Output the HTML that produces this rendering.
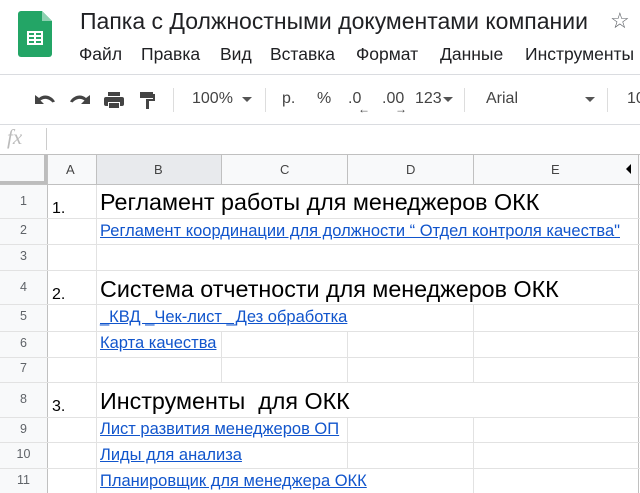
<!DOCTYPE html><html><head><meta charset="utf-8"><style>
body{margin:0;width:640px;height:493px;overflow:hidden;background:#fff;font-family:"Liberation Sans",Arial,sans-serif;position:relative}
.a{position:absolute;white-space:nowrap}
.hl{position:absolute;height:1px;background:#e2e2e2}
.vl{position:absolute;width:1px;background:#e2e2e2}
.rn{position:absolute;left:0;width:47px;text-align:center;font-size:12.5px;color:#5f6368}
.lk{color:#1155cc;text-decoration:underline;font-size:16.5px}
.hd{font-size:23.3px;color:#000}
.tb{color:#444;font-size:16px}
.m{position:absolute;top:44px;font-size:17.5px;color:#202124;white-space:nowrap}
</style></head><body>
<svg class="a" style="left:18px;top:11px" width="34" height="46" viewBox="0 0 34 46"><path d="M3 0h21l10 10v33a3 3 0 0 1-3 3H3a3 3 0 0 1-3-3V3a3 3 0 0 1 3-3z" fill="#23a566"/><path d="M24 0v10h10z" fill="#8ed1b1"/><rect x="9" y="20" width="16" height="14" fill="#fff"/><g fill="#23a566"><rect x="11" y="22" width="5" height="2"/><rect x="18" y="22" width="5" height="2"/><rect x="11" y="26" width="5" height="2"/><rect x="18" y="26" width="5" height="2"/><rect x="11" y="30" width="5" height="2"/><rect x="18" y="30" width="5" height="2"/></g></svg>
<div class="a" style="left:80px;top:8px;font-size:23px;color:#202124">Папка с Должностными документами компании</div>
<div class="a" style="left:610px;top:8px;font-size:22px;color:#5f6368">☆</div>
<div class="m" style="left:79px">Файл</div>
<div class="m" style="left:141px">Правка</div>
<div class="m" style="left:220px">Вид</div>
<div class="m" style="left:270px">Вставка</div>
<div class="m" style="left:356px">Формат</div>
<div class="m" style="left:440px">Данные</div>
<div class="m" style="left:525px">Инструменты</div>
<div class="hl" style="left:0;width:640px;top:74px;background:#dadce0"></div>
<svg class="a" style="left:33px;top:89px" width="140" height="22" viewBox="0 0 140 22" fill="#444">
<path d="M2 6v9h9l-3.5-3.5c3-2.5 8-2.5 12 2l2.5-1c-3.5-6-11-8-16-3.5z"/>
<path d="M57 6v9h-9l3.5-3.5c-3-2.5-8-2.5-12 2l-2.5-1c3.5-6 11-8 16-3.5z"/>
<rect x="75" y="3" width="12" height="4"/><rect x="71" y="8" width="20" height="9" rx="2"/><rect x="75" y="13" width="12" height="6" fill="#fff"/><rect x="76" y="14" width="10" height="5"/>
<rect x="107" y="3" width="13" height="6"/><rect x="120" y="5" width="2" height="6"/><rect x="113" y="10" width="9" height="2"/><rect x="113" y="10" width="3" height="10"/>
</svg>
<div class="vl" style="left:173px;top:88px;height:24px;background:#ddd"></div>
<div class="a tb" style="left:192px;top:90px">100%</div>
<div class="a" style="left:242px;top:97px;border:5px solid transparent;border-top-color:#555;width:0;height:0"></div>
<div class="vl" style="left:265px;top:88px;height:24px;background:#ddd"></div>
<div class="a tb" style="left:282px;top:90px">р.</div>
<div class="a tb" style="left:317px;top:90px">%</div>
<div class="a tb" style="left:348px;top:90px">.0</div>
<div class="a" style="left:358px;top:102px;font-size:12px;color:#444">←</div>
<div class="a tb" style="left:382px;top:90px">.00</div>
<div class="a" style="left:395px;top:102px;font-size:12px;color:#444">→</div>
<div class="a tb" style="left:415px;top:90px">123</div>
<div class="a" style="left:443px;top:97px;border:5px solid transparent;border-top-color:#555;width:0;height:0"></div>
<div class="vl" style="left:464px;top:88px;height:24px;background:#ddd"></div>
<div class="a tb" style="left:486px;top:90px">Arial</div>
<div class="a" style="left:585px;top:97px;border:5px solid transparent;border-top-color:#555;width:0;height:0"></div>
<div class="vl" style="left:607px;top:88px;height:24px;background:#ddd"></div>
<div class="a tb" style="left:627px;top:90px">10</div>
<div class="hl" style="left:0;width:640px;top:124px;background:#dadce0"></div>
<div class="a" style="left:7px;top:125px;font-family:'Liberation Serif',serif;font-style:italic;font-size:21px;color:#bbb">fx</div>
<div class="vl" style="left:46px;top:128px;height:22px;background:#ccc"></div>
<div class="a" style="left:0;top:154px;width:640px;height:30px;background:#f8f9fa;border-top:1px solid #c0c0c0;box-sizing:border-box"></div>
<div class="a" style="left:96px;top:155px;width:125px;height:29px;background:#e8eaed"></div>
<div class="a" style="left:0;top:155px;width:47px;height:338px;background:#f8f9fa"></div>
<div class="vl" style="left:44px;top:155px;height:30px;width:3px;background:#bdbdbd"></div>
<div class="hl" style="left:0;width:47px;top:181px;height:3px;background:#bdbdbd"></div>
<div class="hl" style="left:0;width:640px;top:184px;background:#c0c0c0"></div>
<div class="vl" style="left:47px;top:155px;height:338px;background:#c0c0c0"></div>
<div class="vl" style="left:96px;top:155px;height:29px;background:#c0c0c0"></div>
<div class="vl" style="left:221px;top:155px;height:29px;background:#c0c0c0"></div>
<div class="vl" style="left:347px;top:155px;height:29px;background:#c0c0c0"></div>
<div class="vl" style="left:473px;top:155px;height:29px;background:#c0c0c0"></div>
<div class="vl" style="left:638px;top:155px;height:338px;background:#c0c0c0"></div>
<div class="a" style="left:66px;top:162px;font-size:13px;color:#444">A</div>
<div class="a" style="left:154px;top:162px;font-size:13px;color:#444">B</div>
<div class="a" style="left:280px;top:162px;font-size:13px;color:#444">C</div>
<div class="a" style="left:406px;top:162px;font-size:13px;color:#444">D</div>
<div class="a" style="left:551px;top:162px;font-size:13px;color:#444">E</div>
<div class="a" style="left:626px;top:164px;border:5px solid transparent;border-right-color:#000;border-left:0;width:0;height:0"></div>
<div class="hl" style="left:0;width:640px;top:218px"></div>
<div class="hl" style="left:0;width:640px;top:244px"></div>
<div class="hl" style="left:0;width:640px;top:270px"></div>
<div class="hl" style="left:0;width:640px;top:304px"></div>
<div class="hl" style="left:0;width:640px;top:331px"></div>
<div class="hl" style="left:0;width:640px;top:357px"></div>
<div class="hl" style="left:0;width:640px;top:382px"></div>
<div class="hl" style="left:0;width:640px;top:417px"></div>
<div class="hl" style="left:0;width:640px;top:442px"></div>
<div class="hl" style="left:0;width:640px;top:468px"></div>
<div class="vl" style="left:96px;top:185px;height:308px"></div>
<div class="vl" style="left:473px;top:305px;height:77px"></div>
<div class="vl" style="left:473px;top:418px;height:75px"></div>
<div class="vl" style="left:221px;top:332px;height:50px"></div>
<div class="vl" style="left:347px;top:332px;height:50px"></div>
<div class="vl" style="left:347px;top:418px;height:50px"></div>
<div class="rn" style="top:194px">1</div>
<div class="rn" style="top:223px">2</div>
<div class="rn" style="top:249px">3</div>
<div class="rn" style="top:280px">4</div>
<div class="rn" style="top:309px">5</div>
<div class="rn" style="top:336px">6</div>
<div class="rn" style="top:361px">7</div>
<div class="rn" style="top:392px">8</div>
<div class="rn" style="top:422px">9</div>
<div class="rn" style="top:447px">10</div>
<div class="rn" style="top:473px">11</div>
<div class="a" style="left:52px;top:200px;font-size:16px">1.</div>
<div class="a hd" style="left:100px;top:189px">Регламент работы для менеджеров ОКК</div>
<div class="a lk" style="left:100px;top:222px">Регламент координации для должности “ Отдел контроля качества"</div>
<div class="a" style="left:52px;top:286px;font-size:16px">2.</div>
<div class="a hd" style="left:100px;top:276px">Система отчетности для менеджеров ОКК</div>
<div class="a lk" style="left:100px;top:308px">_КВД _Чек-лист _Дез обработка</div>
<div class="a lk" style="left:100px;top:334px">Карта качества</div>
<div class="a" style="left:52px;top:398px;font-size:16px">3.</div>
<div class="a hd" style="left:100px;top:388px">Инструменты &nbsp;для ОКК</div>
<div class="a lk" style="left:100px;top:420px">Лист развития менеджеров ОП</div>
<div class="a lk" style="left:100px;top:446px">Лиды для анализа</div>
<div class="a lk" style="left:100px;top:472px">Планировщик для менеджера ОКК</div>
</body></html>
